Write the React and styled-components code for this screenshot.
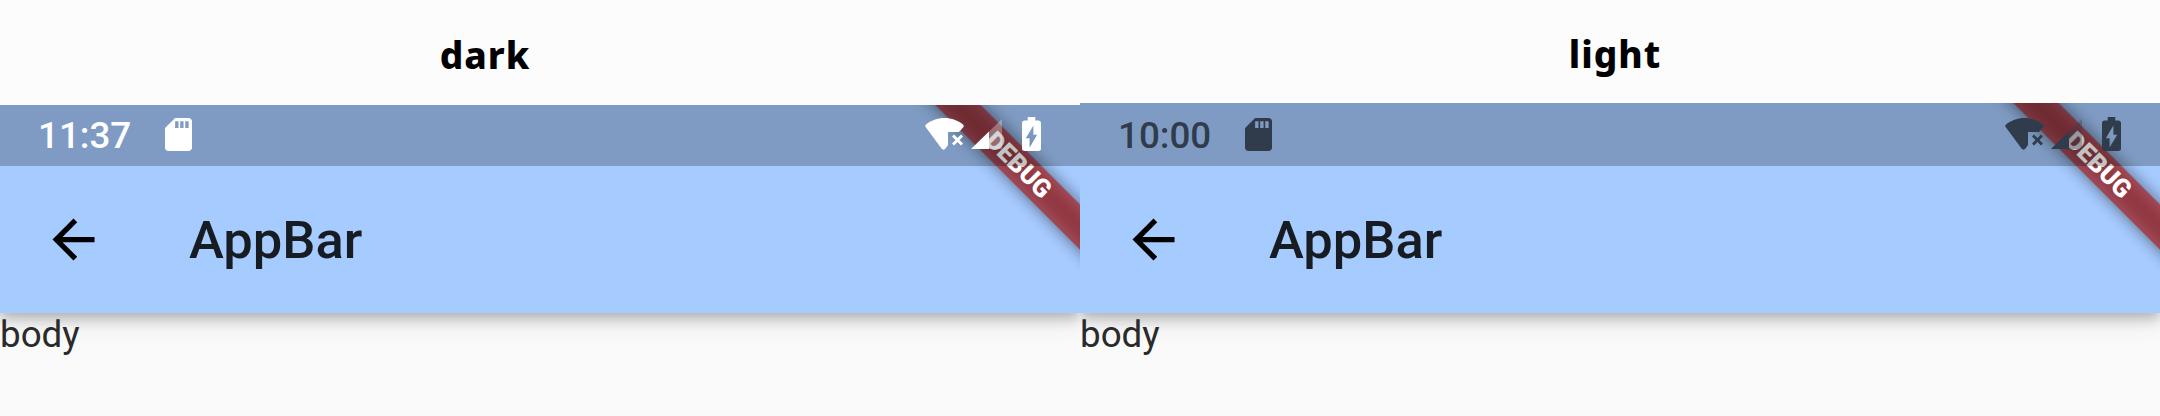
import styled, { createGlobalStyle } from "styled-components"

const GlobalStyle = createGlobalStyle`
	html, body {
		margin: 0;
		padding: 0;
		background: #fcfcfc;
	}
`

const Page = styled.div`
	display: grid;
	grid-template-columns: 1080px 1080px;
	width: 2160px;
	height: 416px;
	overflow: hidden;
	font-family: Roboto, sans-serif;
`

const Column = styled.div`
	display: flex;
	flex-direction: column;
	height: 416px;
`

const Heading = styled.div`
	height: ${(p) => p.$height}px;
	padding-top: 3px;
	padding-right: ${(p) => p.$shift}px;
	box-sizing: border-box;
	display: flex;
	align-items: center;
	justify-content: center;
	font-family: "Noto Sans", sans-serif;
	font-size: 37px;
	font-weight: 800;
	letter-spacing: 1px;
	color: #000;
`

const Screen = styled.div`
	position: relative;
	flex: 1;
	display: flex;
	flex-direction: column;
	overflow: hidden;
	background: #fafafa;
`

const AppBar = styled.div`
	background: #a6cbff;
	box-shadow: 0 5px 12px rgba(0, 0, 0, 0.24), 0 9px 24px rgba(0, 0, 0, 0.1);
`

const StatusBar = styled.div`
	position: relative;
	z-index: 2;
	height: ${(p) => p.$height}px;
	box-sizing: border-box;
	padding: 0 39px 15px 0;
	display: flex;
	align-items: flex-end;
	background: rgba(0, 0, 0, 0.235);
	color: ${(p) => p.$color};
`

const Time = styled.span`
	margin-left: 38px;
	width: 127px;
	font-size: 36.75px;
	line-height: 30px;
	font-weight: 500;
`

const StatusIcons = styled.div`
	margin-left: auto;
	display: flex;
	align-items: flex-end;
`

const ToolBar = styled.div`
	height: 147px;
	display: flex;
	align-items: center;
`

const BackButton = styled.div`
	width: 189px;
	padding-left: 42px;
	box-sizing: border-box;
	display: flex;
	color: #000;
`

const Title = styled.span`
	font-size: 52.5px;
	font-weight: 500;
	color: #171c22;
`

const BodyText = styled.div`
	font-size: 36.75px;
	line-height: 43px;
	color: #2a2a2a;
`

const Banner = styled.div`
	position: absolute;
	z-index: 1;
	top: ${(p) => p.$top}px;
	right: -137px;
	width: 400px;
	height: 31.5px;
	transform: rotate(45deg);
	display: flex;
	align-items: center;
	justify-content: center;

	&::before {
		content: "";
		position: absolute;
		inset: 0;
		background: rgba(0, 0, 0, 0.5);
		filter: blur(8px);
	}
	&::after {
		content: "";
		position: absolute;
		inset: 0;
		background: rgba(183, 28, 28, 0.627);
	}
`

const BannerText = styled.span`
	position: relative;
	z-index: 1;
	padding-left: 4px;
	font-size: 25.5px;
	font-weight: 900;
	line-height: 31.5px;
	color: #fff;
`

const SdCard = () => (
	<svg width="27" height="33" viewBox="4 2 16 20" fill="currentColor" preserveAspectRatio="none">
		<path d="M18 2h-8L4.020 8 4 20c0 1.100.9 2 2 2h12c1.100 0 2-.9 2-2V4c0-1.100-.9-2-2-2zm-6 6h-2V4h2v4zm3 0h-2V4h2v4zm3 0h-2V4h2v4z" />
	</svg>
)

const BackArrow = () => (
	<svg width="63" height="63" viewBox="0 0 24 24" fill="currentColor">
		<path d="M20 11H7.830l5.590-5.590L12 4l-8 8 8 8 1.410-1.410L7.830 13H20v-2z" />
	</svg>
)

const WifiIcon = styled.svg`
	margin-right: 6px;
	margin-bottom: 1px;
`

const Wifi = () => (
	<WifiIcon width="40" height="32" viewBox="0 0 40 32" fill="currentColor">
		<path d="M1 6.500C0 7.500 0 8.500 1 9.500L16.500 30.500C17.500 32 19.500 32 20.500 30.500L23 27V14H34L38 9.500C39 8.500 39 7.500 38 6.500C33 2.500 26.500 0 19.500 0C12.500 0 6 2.500 1 6.500Z" />
		<path d="M27 18.500L29 16.500L32.500 20L36 16.500L38 18.500L34.500 22L38 25.500L36 27.500L32.500 24L29 27.500L27 25.500L30.500 22Z" />
	</WifiIcon>
)

const SignalIcon = styled.svg`
	margin-right: 20px;
	margin-bottom: 2px;
`

const Signal = () => (
	<SignalIcon width="31" height="30" viewBox="0 0 31 30" fill="currentColor">
		<path d="M0 30L18 12.500V30Z" />
		<path d="M18 12.500L31 0V30H18Z" opacity="0.3" />
	</SignalIcon>
)

const Battery = () => (
	<svg width="19" height="34" viewBox="7 2 10 20" fill="currentColor" preserveAspectRatio="none">
		<path d="M15.670 4H14V2h-4v2H8.330C7.600 4 7 4.600 7 5.330v15.330C7 21.400 7.600 22 8.330 22h7.330c.74 0 1.340-.6 1.340-1.330V5.330C17 4.600 16.400 4 15.670 4zM11 20v-5.500H9L13 7v5.500h2L11 20z" />
	</svg>
)

function DeviceScreen({ time, color, statusHeight, bannerTop }) {
	return (
		<Screen>
			<AppBar>
				<StatusBar $height={statusHeight} $color={color}>
					<Time>{time}</Time>
					<SdCard />
					<StatusIcons>
						<Wifi />
						<Signal />
						<Battery />
					</StatusIcons>
				</StatusBar>
				<ToolBar>
					<BackButton>
						<BackArrow />
					</BackButton>
					<Title>AppBar</Title>
				</ToolBar>
			</AppBar>
			<BodyText>body</BodyText>
			<Banner $top={bannerTop}>
				<BannerText>DEBUG</BannerText>
			</Banner>
		</Screen>
	)
}

export default function App() {
	return (
		<>
			<GlobalStyle />
			<Page>
				<Column>
					<Heading $height={105} $shift={110}>dark</Heading>
					<DeviceScreen time="11:37" color="#fff" statusHeight={61} bannerTop={43} />
				</Column>
				<Column>
					<Heading $height={103} $shift={10}>light</Heading>
					<DeviceScreen time="10:00" color="#303c4c" statusHeight={63} bannerTop={45} />
				</Column>
			</Page>
		</>
	)
}
